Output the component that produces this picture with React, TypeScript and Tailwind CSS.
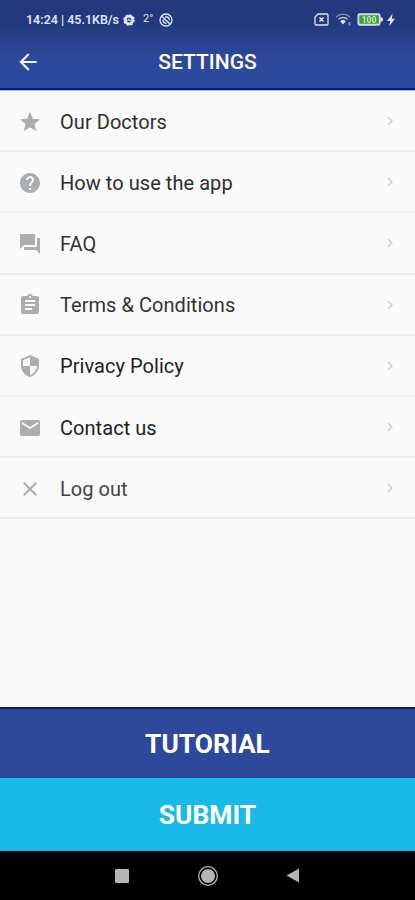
import React from 'react';
import { IconType } from 'react-icons';
import {
    MdArrowBack,
    MdAssignment,
    MdChevronRight,
    MdClose,
    MdEmail,
    MdForum,
    MdHelp,
    MdSecurity,
    MdStar
} from 'react-icons/md';

interface MenuItem {
    key: string;
    label: string;
    icon: IconType;
    labelClass: string;
}

const menuItems: MenuItem[] = [
    { key: 'doctors', label: 'Our Doctors', icon: MdStar, labelClass: 'text-[#2e2e2e]' },
    { key: 'how-to', label: 'How to use the app', icon: MdHelp, labelClass: 'text-[#2e2e2e]' },
    { key: 'faq', label: 'FAQ', icon: MdForum, labelClass: 'text-[#333333]' },
    { key: 'terms', label: 'Terms & Conditions', icon: MdAssignment, labelClass: 'text-[#333333]' },
    { key: 'privacy', label: 'Privacy Policy', icon: MdSecurity, labelClass: 'text-[#222222]' },
    { key: 'contact', label: 'Contact us', icon: MdEmail, labelClass: 'text-[#222222]' },
    { key: 'logout', label: 'Log out', icon: MdClose, labelClass: 'text-[#444444]' }
];

const StatusBar: React.FC = () => (
    <div className="flex h-[38px] items-center justify-between pl-[26px] pr-5 pt-[1px] text-[#dfe5f5]">
        <div className="flex items-center">
            <span className="pt-[1px] text-[12.5px] font-semibold tracking-[-0.02px] whitespace-nowrap">14:24 | 45.1KB/s</span>
            <svg className="ml-[4px] h-3 w-3" viewBox="0 0 12 12" fill="none" stroke="currentColor">
                <circle cx="6" cy="6" r="3.8" strokeWidth="2.8" />
                <circle cx="6" cy="6" r="5.2" strokeWidth="1.2" strokeDasharray="2.1 1.98" />
                <path d="M3.5 6.2h4.5M6 4.4v1.8" strokeWidth="1" />
            </svg>
            <span className="ml-[8px] text-[11px]">2°</span>
            <svg className="ml-[6px] h-[14px] w-[14px]" viewBox="0 0 14 14" fill="none" stroke="currentColor">
                <circle cx="7" cy="7" r="6" strokeWidth="1.3" />
                <path d="M3 3.5l8 7.5M4 6.5a3.4 3.4 0 0 0 3.5 3.8M6 4h2.2A2.4 2.4 0 0 1 10 7.2" strokeWidth="1.4" />
            </svg>
        </div>
        <div className="flex items-center">
            <svg className="h-[13px] w-[15px]" viewBox="0 0 15 13" fill="none" stroke="currentColor">
                <path d="M4.2 1h8.6a1.2 1.2 0 0 1 1.2 1.2v8.6a1.2 1.2 0 0 1-1.2 1.2H2.2A1.2 1.2 0 0 1 1 10.8V4z" strokeWidth="1.3" />
                <path d="M5.5 4.5l4 4M9.5 4.5l-4 4" strokeWidth="1.5" />
            </svg>
            <svg className="ml-[6px] h-[13px] w-[17px]" viewBox="0 0 17 13" fill="none" stroke="currentColor">
                <path d="M1 4a10 10 0 0 1 14 0" strokeWidth="1.2" opacity=".5" />
                <path d="M3.3 6.4a6.8 6.8 0 0 1 9.4 0" strokeWidth="1.3" opacity=".75" />
                <path d="M5.2 8.3a4 4 0 0 1 5.6 0L8 11.5z" fill="currentColor" stroke="none" />
                <path d="M14.5 9v3.5" strokeWidth="1.6" opacity=".6" />
            </svg>
            <svg className="ml-[5px] h-[13px] w-[27px]" viewBox="0 0 27 13">
                <path d="M2.5.3h19a2 2 0 0 1 2 2v1.5l2.5 1.5v2.4L23.5 9.2v1.5a2 2 0 0 1-2 2h-19a2 2 0 0 1-2-2V2.3a2 2 0 0 1 2-2z" fill="#d5dbea" />
                <rect x="2.3" y="2.2" width="19.6" height="8.6" rx=".8" fill="#3e9b3a" />
                <text x="12" y="9.6" textAnchor="middle" fontSize="8.5" fontWeight="700" fill="#c9efb4">100</text>
            </svg>
            <svg className="ml-[3px] h-3 w-2" viewBox="0 0 8 12" fill="currentColor">
                <path d="M5.5 0L0 7h3.2L2.4 12 8 4.8H4.8z" />
            </svg>
        </div>
    </div>
);

const Header: React.FC = () => (
    <header className="h-[90px] border-b-2 border-[#0c1c88] bg-linear-to-b from-[#223a7d] from-25% to-[#2d499e] to-70%">
        <StatusBar />
        <div className="grid h-[48px] grid-cols-[56px_1fr_56px] items-center text-white">
            <button className="flex justify-center" aria-label="Back">
                <MdArrowBack className="h-[26px] w-[26px] text-[#f0f3fc]" />
            </button>
            <h1 className="pt-[1px] text-center text-[21px] font-medium">SETTINGS</h1>
        </div>
    </header>
);

const NavigationBar: React.FC = () => (
    <nav className="flex h-[49px] items-center bg-black text-[#b4b4b2]">
        <div className="ml-[115px] h-[14px] w-[14px] rounded-[1px] bg-current" />
        <svg className="ml-[68px] h-[22px] w-[22px]" viewBox="0 0 22 22">
            <circle cx="11" cy="11" r="9.3" fill="none" stroke="currentColor" strokeWidth="1.3" />
            <circle cx="11" cy="11" r="7" fill="currentColor" />
        </svg>
        <svg className="ml-[67px] h-[15px] w-[14px]" viewBox="0 0 14 15" fill="currentColor">
            <path d="M.5 7.5L13 .5v14z" />
        </svg>
    </nav>
);

const App: React.FC = () => {
    return (
        <div className="flex h-[900px] w-[415px] flex-col overflow-hidden bg-[#fafafa] font-['Roboto',sans-serif]">
            <Header />

            <ul className="flex-1 border-t border-[#a9b3dd]">
                {menuItems.map(({ key, label, icon: Icon, labelClass }) => (
                    <li key={key} className="flex h-[61.2px] items-center border-b-2 border-[#eeeeee] pt-[2px] pl-[18px] pr-[16px]">
                        <Icon className="h-6 w-6 text-[#abaeb0]" />
                        <span className={`ml-[18px] flex-1 text-[20px] tracking-[0.05px] ${labelClass}`}>{label}</span>
                        <MdChevronRight className="mb-[1px] h-[18px] w-[18px] text-[#cfcfcf]" />
                    </li>
                ))}
            </ul>

            {/* Bottom actions */}
            <button className="h-[71px] border-t-2 border-[#0c1c88] bg-[#2e499c] pt-[2px] text-[26.4px] font-bold text-white">
                TUTORIAL
            </button>
            <button className="h-[73px] bg-[#1abae8] pt-[2px] text-[26.4px] font-bold text-white">
                SUBMIT
            </button>

            <NavigationBar />
        </div>
    );
};

export default App;
